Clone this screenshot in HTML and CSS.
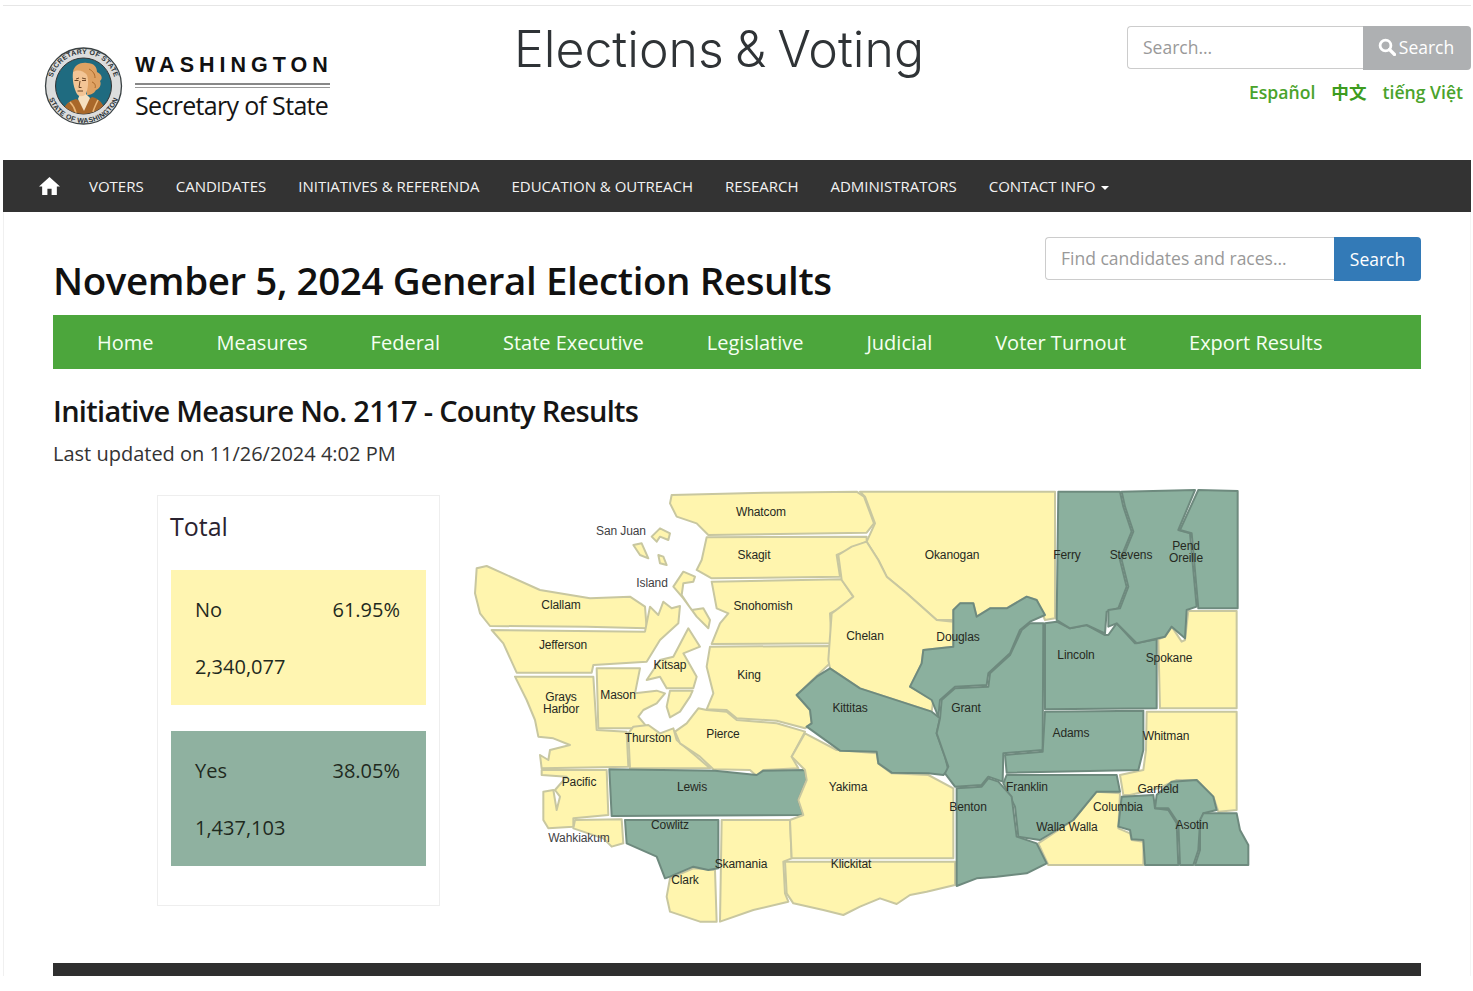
FILE: index.html
```html
<!DOCTYPE html>
<html lang="en">
<head>
<meta charset="utf-8">
<title>Initiative Measure No. 2117 - County Results</title>
<link rel="stylesheet" href="styles.css">
</head>
<body>
<div class="page">
  <header class="site-header">
    <a class="logo">
      <svg class="seal" viewBox="0 0 90 85" width="90" height="85" aria-hidden="true">
        <defs>
          <clipPath id="inner"><circle cx="43.5" cy="41" r="28"/></clipPath>
          <path id="arcTop" d="M11.5 41a32 32 0 0 1 64 0"/>
          <path id="arcBot" d="M6.7 41a36.8 36.8 0 0 0 73.6 0"/>
        </defs>
        <circle cx="43.5" cy="41" r="38" fill="#dcdddd" stroke="#3a4143" stroke-width="1.3"/>
        <circle cx="43.5" cy="41" r="28" fill="#1f6b80" stroke="#333" stroke-width="1"/>
        <text class="seal-text"><textPath href="#arcTop" startOffset="50%" text-anchor="middle">SECRETARY OF STATE</textPath></text>
        <text class="seal-text"><textPath href="#arcBot" startOffset="50%" text-anchor="middle">STATE OF WASHINGTON</textPath></text>
        <g clip-path="url(#inner)">
          <path d="M22 70C24 58 30 56 36 54L44 58L52 52C60 54 64 59 66 70Z" fill="#a9682a"/>
          <path d="M30 57C33 60 35 64 36 68M58 55C56 59 54 63 53 67" stroke="#eab677" stroke-width="1.6" fill="none"/>
          <path d="M38 54L44 66L50 53L46 49H40Z" fill="#f6e0bf"/>
          <path d="M33 27C34 20 41 17 47 18C54 18 57 22 57 27C62 29 63 34 60 36C62 40 59 44 56 45C54 49 50 50 47 50L47 40L46 30C43 26 38 25 33 27Z" fill="#dfa263"/>
          <path d="M49 24C53 26 55 29 55 33M52 37C55 38 56 41 55 43" stroke="#a9682a" stroke-width="1" fill="none"/>
          <path d="M33 27C38 24 44 26 47 30C49 36 48 44 46 49C43 52 39 52 37 49C34 44 32 35 33 27Z" fill="#f3c595"/>
          <path d="M34.500 35.500H38.500M42 35.500H46M40 36L39 42.500H41.500M37.500 46H43M36 34L39 33M42 33L46 34" stroke="#59361a" stroke-width=".9" fill="none"/>
        </g>
      </svg>
      <span class="logo-text">
        <span class="logo-state">WASHINGTON</span>
        <span class="logo-rule"></span>
        <span class="logo-office">Secretary of State</span>
      </span>
    </a>
    <div class="site-title">Elections &amp; Voting</div>
    <div class="header-tools">
      <form class="site-search">
        <input class="field site-field" type="text" placeholder="Search...">
        <button class="site-btn" type="button">
          <svg viewBox="0 0 18 18" width="18" height="18" aria-hidden="true"><circle cx="7.500" cy="7.500" r="5.400" fill="none" stroke="#fff" stroke-width="2.800"/><path d="M11.500 11.500l5 5" stroke="#fff" stroke-width="3.200" stroke-linecap="round"/></svg>
          Search
        </button>
      </form>
      <div class="langs">
        <a>Español</a>
        <a class="zh" lang="zh">中文</a>
        <a>tiếng Việt</a>
      </div>
    </div>
  </header>

  <nav class="main-nav">
    <a class="home-link" aria-label="Home">
      <svg viewBox="2 3 20 17" width="21" height="18" aria-hidden="true"><path d="M10 20v-6h4v6h5v-8h3L12 3 2 12h3v8z" fill="#fff"/></svg>
    </a>
    <a>Voters</a>
    <a>Candidates</a>
    <a>Initiatives &amp; Referenda</a>
    <a>Education &amp; Outreach</a>
    <a>Research</a>
    <a>Administrators</a>
    <a>Contact Info <span class="caret"></span></a>
  </nav>

  <main class="content">
    <div class="title-row">
      <h1>November 5, 2024 General Election Results</h1>
      <form class="race-search">
        <input class="field race-field" type="text" placeholder="Find candidates and races...">
        <button class="race-btn" type="button">Search</button>
      </form>
    </div>

    <nav class="sub-nav">
      <a>Home</a>
      <a>Measures</a>
      <a>Federal</a>
      <a>State Executive</a>
      <a>Legislative</a>
      <a>Judicial</a>
      <a>Voter Turnout</a>
      <a>Export Results</a>
    </nav>

    <h2>Initiative Measure No. 2117 - County Results</h2>
    <p class="updated">Last updated on 11/26/2024 4:02 PM</p>

    <section class="results">
      <aside class="total">
        <h3>Total</h3>
        <div class="tally tally-no">
          <div class="tally-line"><span>No</span><span>61.95%</span></div>
          <div class="tally-line"><span>2,340,077</span></div>
        </div>
        <div class="tally tally-yes">
          <div class="tally-line"><span>Yes</span><span>38.05%</span></div>
          <div class="tally-line"><span>1,437,103</span></div>
        </div>
      </aside>

      <svg class="map" viewBox="470 480 800 450" width="800" height="450" role="img" aria-label="Map of Washington counties">
        <g transform="translate(470 480) scale(.33333)">
          <g class="no">
            <polygon points="605,45 890,38 1160,35 1182,50 1212,130 1190,158 715,165 680,130 620,110 600,70"/>
            <polygon points="710,172 1190,170 1190,185 1100,225 1110,290 725,295 680,270 695,240"/>
            <polygon points="725,305 1115,298 1150,350 1110,385 1080,400 1085,490 725,492 750,430 775,400 740,385"/>
            <polygon points="720,500 1085,498 1080,550 980,645 1020,690 1025,730 1005,745 920,722 800,715 770,690 710,688 730,640 710,560"/>
            <polygon points="20,265 50,258 210,330 360,355 480,350 525,380 530,445 350,440 60,438 30,400 15,340"/>
            <polygon points="65,450 525,455 540,380 565,405 580,365 605,385 630,378 625,430 570,480 530,545 370,555 365,578 140,578 100,490"/>
            <polygon points="135,590 370,590 380,750 470,755 475,860 215,865 210,825 235,840 240,810 300,795 250,775 205,770 195,720 170,660"/>
            <polygon points="380,565 510,565 495,640 560,632 585,640 560,670 520,690 505,710 530,740 490,745 385,745"/>
            <polygon points="610,530 655,445 690,500 640,520 680,590 670,625 590,625 570,590 530,600 570,540"/>
            <polygon points="600,632 668,632 660,650 630,695 600,712 590,680"/>
            <polygon points="490,740 535,735 570,760 610,745 620,780 680,830 720,865 480,865 475,760"/>
            <polygon points="685,685 710,690 770,695 800,720 920,730 1005,755 965,830 985,865 880,870 860,888 840,870 730,868 690,830 630,790 615,755 650,730"/>
            <polygon points="215,870 410,870 415,1005 310,1015 310,1040 235,1045 220,1020 220,935 250,930 260,990 270,950 255,930 290,890 215,885"/>
            <polygon points="315,1020 455,1018 460,1090 425,1100 400,1075 310,1045"/>
            <polygon points="600,1195 670,1165 735,1170 740,1325 690,1325 600,1295 590,1250"/>
            <polygon points="755,1020 960,1020 965,1135 940,1145 945,1240 955,1265 850,1290 750,1325"/>
            <polygon points="545,170 570,145 600,160 595,180 570,170 560,185"/>
            <polygon points="490,195 515,190 535,235 510,225"/>
            <polygon points="565,225 580,230 590,255 570,250"/>
            <polygon points="610,320 640,275 675,290 670,305 640,310 635,345 665,390 700,385 720,420 715,445 680,410 640,355"/>
          </g>
          <g class="yes">
            <polygon points="418,868 735,872 860,885 880,872 1005,870 1010,900 985,960 1000,1005 425,1008"/>
            <polygon points="465,1020 745,1020 745,1165 715,1170 670,1160 600,1190 585,1195 560,1130 470,1090"/>
          </g>
        </g>
        <g transform="translate(860 480) scale(.33333)">
          <g class="no">
            <polygon points="-165,760 -70,810 50,820 55,850 95,880 205,885 280,925 280,1135 -205,1135 -210,1020 -170,1005 -185,960 -160,900 -165,870 -205,830"/>
            <polygon points="-225,1145 285,1145 285,1215 200,1235 150,1245 110,1272 60,1255 0,1280 -50,1305 -110,1290 -200,1270 -220,1240"/>
            <polygon points="0,35 585,35 585,415 555,420 530,360 500,350 440,385 390,385 350,410 340,370 300,370 280,390 280,420 230,420 140,340 80,290 55,240 20,185 45,130 15,50"/>
            <polygon points="20,185 55,240 80,290 140,340 230,420 280,425 280,500 190,510 185,550 150,620 220,660 215,695 0,625 -90,565 -95,540 -85,400 -65,385 -20,350 -55,300 -65,225 -25,200"/>
            <polygon points="985,393 1130,393 1130,685 900,685 895,478 915,470 935,440 965,485 975,480"/>
            <polygon points="860,695 1130,695 1130,990 1075,995 1060,950 1010,900 950,900 895,925 810,945 790,945 780,885 850,870 858,810"/>
            <polygon points="710,935 780,940 775,1045 810,1060 815,1080 850,1085 850,1155 565,1155 535,1090 640,1020"/>
          </g>
          <g class="yes">
            <polygon points="-90,565 0,625 215,695 240,715 230,760 255,830 265,870 250,885 205,880 95,878 55,850 50,815 -60,812 -160,740 -145,730 -150,690 -190,645 -130,590"/>
            <polygon points="280,390 300,370 340,370 350,410 390,385 440,385 500,350 530,360 555,405 510,425 480,450 450,520 385,580 380,615 285,620 240,660 235,710 215,660 150,620 185,550 190,510 280,500"/>
            <polygon points="285,625 385,620 390,580 450,525 485,450 510,430 550,430 548,810 430,820 428,905 385,890 365,915 285,920 255,880 265,860 230,760 240,715 245,660"/>
            <polygon points="555,430 590,425 630,445 680,435 735,465 745,465 770,430 825,490 890,478 890,685 555,688"/>
            <polygon points="595,35 780,35 790,80 815,155 780,240 800,320 775,385 740,395 735,460 680,435 630,445 590,420"/>
            <polygon points="785,35 1005,30 955,150 990,160 1010,380 980,390 975,475 935,440 915,470 830,490 770,430 745,440 745,390 780,385 805,320 785,240 820,155 795,80"/>
            <polygon points="1015,30 1133,33 1133,385 1015,385 995,160 960,150"/>
            <polygon points="555,695 850,692 850,810 835,870 440,878 435,825 548,815"/>
            <polygon points="440,885 770,885 780,935 710,935 640,1020 540,1080 475,1070 465,980 430,910"/>
            <polygon points="290,925 365,920 385,895 415,905 455,950 470,1070 530,1090 560,1150 500,1180 410,1190 350,1195 290,1218"/>
            <polygon points="785,950 880,945 885,985 925,990 950,1030 955,1155 855,1155 850,1080 815,1078 810,1050 775,1040"/>
            <polygon points="890,945 935,905 1010,900 1060,950 1070,990 1030,1000 1020,1030 1015,1110 1000,1155 960,1155 955,1030 925,985 885,985"/>
            <polygon points="1030,1000 1130,1000 1140,1050 1165,1095 1165,1155 1005,1155 1020,1110 1020,1020"/>
          </g>
        </g>
        <g class="labels">
          <text x="761" y="512">Whatcom</text>
          <text x="754" y="555">Skagit</text>
          <text class="outside" x="621" y="531">San Juan</text>
          <text class="outside" x="652" y="583">Island</text>
          <text x="952" y="555">Okanogan</text>
          <text x="1067" y="555">Ferry</text>
          <text x="1131" y="555">Stevens</text>
          <text x="1186" y="546">Pend</text>
          <text x="1186" y="558">Oreille</text>
          <text x="561" y="605">Clallam</text>
          <text x="763" y="606">Snohomish</text>
          <text x="865" y="636">Chelan</text>
          <text x="958" y="637">Douglas</text>
          <text x="563" y="645">Jefferson</text>
          <text x="1076" y="655">Lincoln</text>
          <text x="1169" y="658">Spokane</text>
          <text x="670" y="665">Kitsap</text>
          <text x="749" y="675">King</text>
          <text x="561" y="697">Grays</text>
          <text x="561" y="709">Harbor</text>
          <text x="618" y="695">Mason</text>
          <text x="850" y="708">Kittitas</text>
          <text x="966" y="708">Grant</text>
          <text x="723" y="734">Pierce</text>
          <text x="648" y="738">Thurston</text>
          <text x="1071" y="733">Adams</text>
          <text x="1166" y="736">Whitman</text>
          <text x="579" y="782">Pacific</text>
          <text x="692" y="787">Lewis</text>
          <text x="848" y="787">Yakima</text>
          <text x="1027" y="787">Franklin</text>
          <text x="1158" y="789">Garfield</text>
          <text x="968" y="807">Benton</text>
          <text x="1118" y="807">Columbia</text>
          <text x="670" y="825">Cowlitz</text>
          <text x="1067" y="827">Walla Walla</text>
          <text x="1192" y="825">Asotin</text>
          <text class="outside" x="579" y="838">Wahkiakum</text>
          <text x="741" y="864">Skamania</text>
          <text x="851" y="864">Klickitat</text>
          <text x="685" y="880">Clark</text>
        </g>
      </svg>
    </section>

    <div class="footer-bar"></div>
  </main>
</div>
</body>
</html>
```

FILE: styles.css
```css
* { box-sizing: border-box; }
html, body { margin: 0; padding: 0; background: #fff; }
body { font-family: "Open Sans", "Noto Sans", sans-serif; color: #222; height: 991px; overflow: hidden; }
a { color: inherit; text-decoration: none; }

.page { margin: 5px 2px 0 3px; border-top: 1px solid #e6e6e6; height: 971px; overflow: hidden; }

/* header */
.site-header { display: flex; height: 154px; }
.logo { display: flex; width: 511px; padding: 39px 0 0 37px; align-items: flex-start; }
.seal { display: block; flex: none; }
.seal-text { font: 700 7px "Liberation Sans", sans-serif; fill: #2c3336; letter-spacing: .3px; }
.logo-text { display: flex; flex-direction: column; width: 195px; margin: 9px 0 0 5px; }
.logo-state { font: 700 21.5px/22px "Liberation Sans", sans-serif; letter-spacing: 5px; color: #111; white-space: nowrap; }
.logo-rule { display: block; height: 5px; margin-top: 7px; border-top: 2px solid #888; border-bottom: 1px solid #999; }
.logo-office { font: 400 25px/34px "Open Sans", sans-serif; letter-spacing: -.68px; color: #151515; white-space: nowrap; }

.site-title { width: 613px; padding-top: 11px; font: 300 50px/64px Inter, sans-serif; word-spacing: -3px; color: #2f3336; white-space: nowrap; }

.header-tools { flex: 1; padding-top: 20px; display: flex; flex-direction: column; align-items: flex-end; }
.site-search, .race-search { display: flex; }
.field { font: 400 17.5px "Open Sans", sans-serif; color: #555; background: #fff; border: 1px solid #ccc; border-right: 0; border-radius: 4px 0 0 4px; padding: 0 15px 2px; outline: 0; }
.field::placeholder { color: #999; opacity: 1; }
.site-field { width: 236px; height: 43px; }
.site-btn { width: 108px; height: 44px; display: flex; align-items: center; justify-content: center; gap: 3px; font: 400 17.5px "Open Sans", sans-serif; color: #fff; background: #aeb0b2; border: 0; border-radius: 0 4px 4px 0; padding: 0 2px 2px 0; }
.langs { display: flex; gap: 16px; margin: 10px 8px 0 0; font-weight: 600; font-size: 17.6px; line-height: 24px; color: #4aa32b; }
.zh { font-family: "Noto Sans CJK SC", sans-serif; font-weight: 700; color: #3d9c1e; }

/* dark nav */
.main-nav { display: flex; align-items: center; gap: 32px; height: 52px; padding-left: 36px; background: #333; color: #f2f2f2; font-size: 15px; text-transform: uppercase; white-space: nowrap; }
.home-link { display: flex; margin-right: -3px; }
.caret { display: inline-block; margin-left: 2px; vertical-align: middle; border-top: 4px solid #fff; border-left: 4px solid transparent; border-right: 4px solid transparent; }

/* content */
.content { padding: 0 49px; height: 764px; border-left: 1px solid #f0f0f0; border-right: 1px solid #f4f4f4; }
.title-row { display: flex; justify-content: space-between; height: 103px; }
h1 { margin: 42px 0 0; font-size: 38.5px; line-height: 52px; font-weight: 600; letter-spacing: -.4px; color: #111; white-space: nowrap; }
.race-search { margin-top: 25px; height: 44px; }
.race-field { width: 289px; height: 43px; }
.race-btn { width: 87px; height: 44px; font: 400 17.5px "Open Sans", sans-serif; color: #fff; background: #337ab7; border: 0; border-radius: 0 4px 4px 0; padding: 0 0 1px; }

.sub-nav { display: flex; align-items: center; gap: 63px; height: 54px; padding-left: 44px; background: #4ca63c; color: #f5fff2; font-size: 20px; white-space: nowrap; }

h2 { margin: 22px 0 0; font-size: 29px; line-height: 40px; font-weight: 600; letter-spacing: -.7px; color: #151515; white-space: nowrap; }
.updated { margin: 10px 0 0; font-size: 20px; line-height: 26px; color: #333; white-space: nowrap; }

.results { display: flex; align-items: flex-start; height: 483px; margin-top: 13px; }
.total { width: 283px; height: 411px; margin: 15px 0 0 104px; padding: 13px 13px 0 12px; border: 1px solid #eee; flex: none; color: #222; }
h3 { margin: 0 0 27px; font-size: 25px; line-height: 34px; font-weight: 400; color: #2a2330; }
.tally { height: 135px; margin-left: 1px; padding: 27px 26px 0 24px; margin-bottom: 26px; font-size: 20px; color: #1f2a1e; }
.tally-no { background: #fff5b1; }
.tally-yes { background: #8fb1a0; }
.tally-line { display: flex; justify-content: space-between; height: 57px; line-height: 26px; }

.map { display: block; flex: none; margin-left: 30px; }
.map .no polygon { fill: #fff5ae; stroke: #c8c7a0; stroke-width: 6; stroke-linejoin: round; }
.map .yes polygon { fill: #8bb09e; stroke: #6e8a7e; stroke-width: 6; stroke-linejoin: round; }
.labels text { font: 400 12px "Liberation Sans", Arial, sans-serif; fill: #26291f; text-anchor: middle; dominant-baseline: central; letter-spacing: -.1px; }
.labels .outside { fill: #3f4144; }

.footer-bar { height: 13px; background: #2f2f2f; }
```
